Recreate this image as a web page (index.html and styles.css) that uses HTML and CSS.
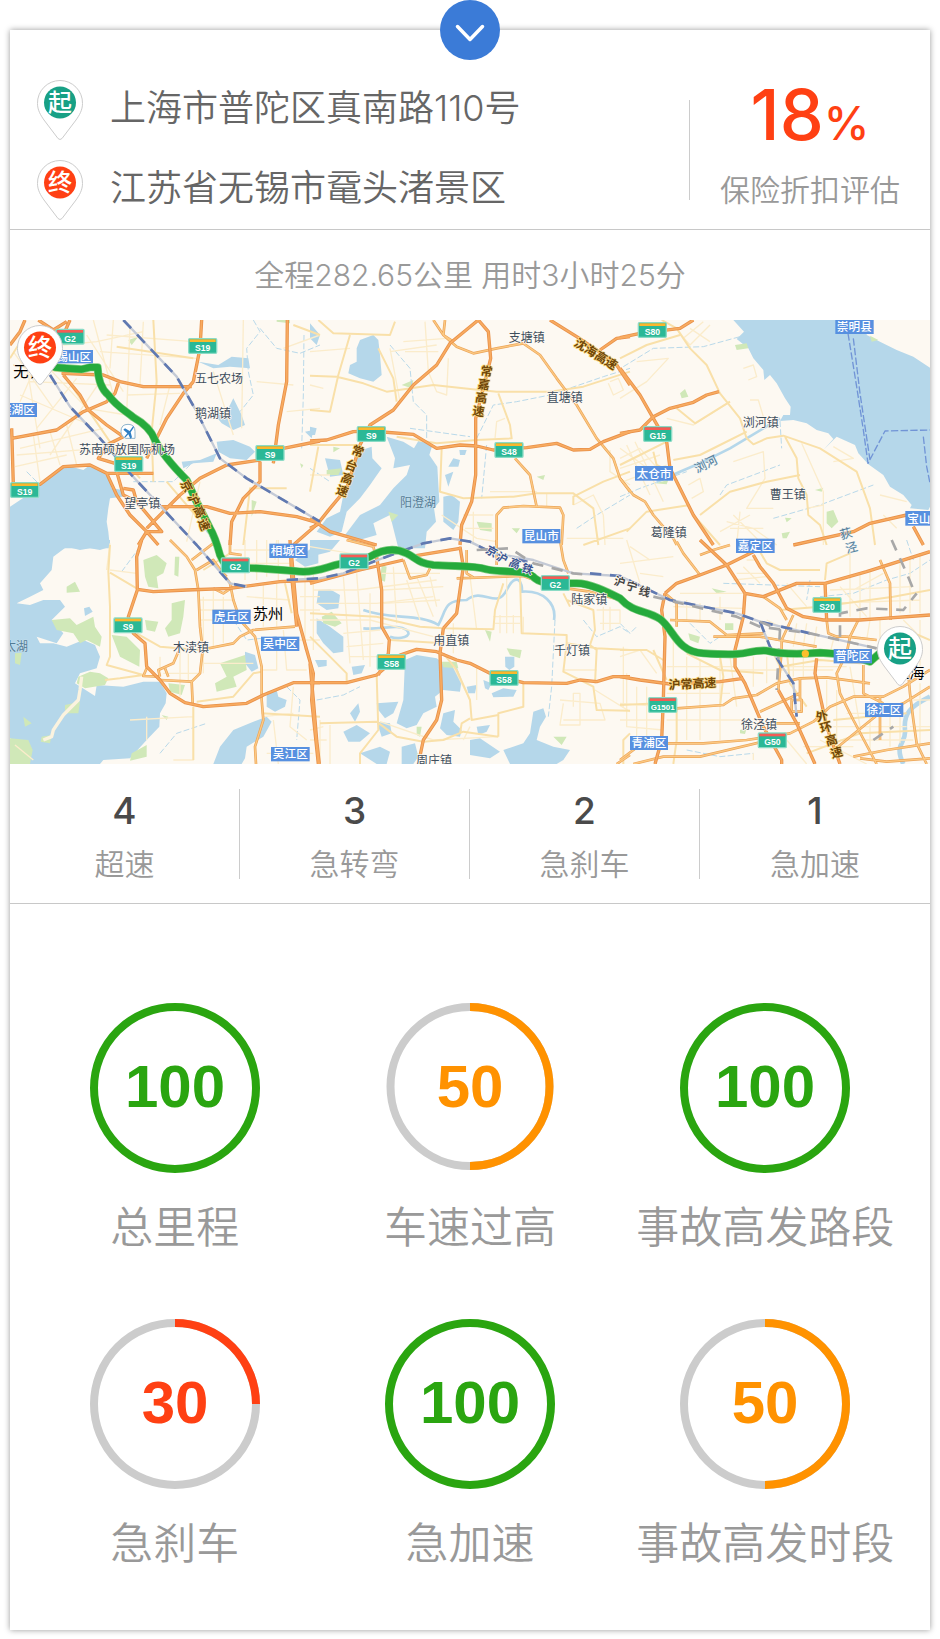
FILE: index.html
```html
<!DOCTYPE html>
<html lang="zh-CN">
<head>
<meta charset="utf-8">
<meta name="viewport" content="width=device-width, initial-scale=1">
<title>行程评估</title>
<link rel="stylesheet" href="styles.css">
</head>
<body>
<svg class="defs" aria-hidden="true">
  <defs>
    <path id="pin-shape" d="M23 .5A22.500 22.500 0 0 1 45.500 23.500C45.500 30 42.500 35 39 40L25 58.500Q23 60.500 21 58.500L7 40C3.500 35 .5 30 .5 23.500A22.500 22.500 0 0 1 23 .5Z"/>
    <symbol id="pin-start" viewBox="0 0 46 60"><use href="#pin-shape" class="pin-body"/><circle cx="23" cy="22.500" r="16" fill="#17a085"/><text class="pin-char" x="23" y="31">起</text></symbol>
    <symbol id="pin-end" viewBox="0 0 46 60"><use href="#pin-shape" class="pin-body"/><circle cx="23" cy="22.500" r="16" fill="#ff4013"/><text class="pin-char" x="23" y="31">终</text></symbol>
  </defs>
</svg>
<main class="card">
  <button class="toggle" type="button" aria-label="收起"><svg width="60" height="60" viewBox="0 0 60 60" aria-hidden="true"><path d="M17.500 26.500L30 39.500L42.500 26.500" fill="none" stroke="#fff" stroke-width="3.500" stroke-linecap="round" stroke-linejoin="round"/></svg></button>

  <header class="trip">
    <ul class="stops">
      <li class="stop"><svg class="pin" viewBox="0 0 46 60" aria-hidden="true"><use href="#pin-start" width="46" height="60"/></svg><span class="address">上海市普陀区真南路110号</span></li>
      <li class="stop"><svg class="pin" viewBox="0 0 46 60" aria-hidden="true"><use href="#pin-end" width="46" height="60"/></svg><span class="address">江苏省无锡市鼋头渚景区</span></li>
    </ul>
    <div class="divider"></div>
    <div class="discount">
      <div class="discount-value">18<span class="percent">%</span></div>
      <div class="discount-label">保险折扣评估</div>
    </div>
  </header>

  <p class="summary">全程282.65公里 用时3小时25分</p>

  <svg class="map" viewBox="0 0 2760 1332" role="img" aria-label="行程路线地图">
    <defs>
      <g id="highways">
        <path transform="translate(-30 -15)" d="M605 15L600 100L580 200L550 235L500 310L470 370L440 430M862 15L860 200L835 330L820 445M185 175L310 180L360 200L430 215L575 215M35 370L170 345L250 290L320 260L345 235L355 205M190 180L240 240L265 285L320 330L370 365M370 365L320 390L295 430L345 445M35 510L120 508L190 455L270 450L320 475L350 540L390 600L440 650L475 690M320 475L460 475M350 470L370 540L410 560L460 620L485 650L440 650L415 690M440 640L540 540L600 490L680 450L780 435L850 400L960 378M480 575L620 575L690 595L780 590L890 605L960 625M780 440L780 500L730 550L695 620L690 690M210 15L190 60L100 100M30 90L60 50L75 15M115 15L160 45L200 20M35 340L40 510M370 520L400 525L410 560M960 620L880 690"/>
        <path transform="translate(900 -15)" d="M0 378L50 375L130 350L180 348L310 358L380 400L450 390L500 393L550 405L650 398L740 385L790 405L840 403L880 380L960 350M505 15L420 85L380 150L310 210L250 285L180 330L150 390L110 520L60 580L20 630L0 640M505 15L535 50L542 130L525 200L497 310L497 480L485 560L455 630L450 690M720 15L800 65L860 105L920 150L960 210M870 105L920 70L960 65M0 610L60 650L200 690"/>
        <path transform="translate(1830 -15)" d="M0 160L60 240L100 310L140 380L150 460L220 600L280 690M0 355L60 345L100 305L150 280L220 262L260 240L297 230M0 68L60 55L180 40L220 15M520 690L700 650L750 625L860 600M880 635L910 690"/>
        <path transform="translate(-30 660)" d="M425 0L410 50L412 150L385 230L400 280L435 310L440 380L480 420L510 460L555 488L610 500L740 490L790 465L880 428L960 428M412 148L460 155L560 150L690 145L840 125L960 120M875 50L890 220L920 330L940 400L935 480L955 672M870 0L875 110L890 260"/>
        <path transform="translate(900 660)" d="M0 428L110 428L200 405L270 345L320 328L380 335L440 360L480 370L550 405L640 428L770 430L810 420L860 425L910 410L960 410M400 265L390 340L395 480L380 540L340 600L325 672M400 265L440 220L450 150L460 80L450 20M200 50L215 150L215 260L238 300L235 340L205 405M0 130L150 90L280 60M0 370L10 480L20 600L28 672M300 50L450 25"/>
        <path transform="translate(1830 660)" d="M0 410L60 420L150 432L300 425L370 415M135 160L125 210L135 290L130 480L125 600L105 672M135 160L170 130L240 105L320 75L400 35L430 0M240 0L320 75L375 160L370 230L345 330L345 380L375 430L430 560L485 660L485 672M400 45L420 80L460 130L500 205L550 230L610 240L720 240L790 235L930 225M375 160L430 170L530 130L615 130L740 95L930 35M615 130L620 240M590 355L585 400L605 490L620 560L660 672M475 450L530 550L585 672"/>
      </g>
      <g id="roads">
        <path transform="translate(900 -15)" d="M370 15L400 60L440 95L490 115L560 100L640 85L690 120L740 190L800 270L860 370L910 430L930 490L960 530M615 430L660 480L680 575M560 690V600L580 578L640 573L750 578L760 600L755 690M405 15L400 60L430 80"/>
        <path transform="translate(1830 -15)" d="M0 490L40 540L75 560L100 600L160 670L170 690"/>
        <path transform="translate(-30 660)" d="M510 0L560 50L585 90L595 150L600 260L608 330L600 400L575 425L480 420M575 425L578 490M590 90L640 60L690 130L700 180L720 240L765 290L785 380L785 480L790 540L765 620L768 672M480 410L475 390L520 370L535 335M495 385L505 410M440 385L430 408L480 410M600 330L700 310L720 290L760 270L885 260M640 70L680 110M575 60L640 10M690 0V40L725 45M640 145L670 160L700 140"/>
        <path transform="translate(900 660)" d="M280 60L300 115L350 105L360 85M440 115L640 108L700 130M110 0L190 20L200 60M470 30L470 100L490 112M560 0V75M750 0L760 60L775 100M770 145L840 155L930 180M920 672L960 645"/>
        <path transform="translate(1830 660)" d="M170 5L190 40L240 105M240 45L280 30L330 15M620 240L625 280L650 290L680 290M780 60L810 130L812 240M150 240L270 245L320 285L430 280M280 290L420 290L590 320M520 225L485 300L485 330L475 450M430 170L480 205L500 240M715 240L690 290L680 340L650 400L660 460L700 540L770 672M170 505L310 495L340 475L410 465L470 430L540 415L620 412L750 430M0 660L60 615L150 610L250 610L380 600L510 580L580 545L630 500L700 470L790 470L850 440L930 390M730 375L730 460L790 490M865 400L870 460L880 540L890 610L920 672M930 440L850 490L790 510L630 640M40 672L130 650L240 650L450 600M700 650L800 630L930 610M780 470V600M450 550L540 550M420 515L540 460M135 160L170 190L170 260M540 415V480M515 480H545V515H515ZM720 655L800 665L930 655M680 290L770 300"/>
      </g>
    </defs>
    <rect width="2760" height="1332" fill="#fdf9f2"/>

    <g fill="#b5d7ea">
      <path transform="translate(-30 -15)" d="M30 575L75 545L85 520L120 508L150 490L185 460L215 455L250 465L270 450L300 465L325 485L335 520L370 525L368 545L330 550L325 580L320 620L325 650L330 700L30 700ZM650 380L700 375L750 395L765 410L740 435L690 430L655 410ZM640 295L680 290L700 250L725 300L735 330L700 345L665 325ZM595 140L655 150L695 125L745 130L750 160L690 155L640 160ZM940 345L915 350L935 370ZM545 440L600 435L650 415L640 440L580 445L550 460Z"/>
      <path transform="translate(900 -15)" d="M150 75L190 60L205 75L210 120L215 180L190 200L150 190L115 175L120 150L140 140L140 100ZM140 410L185 395L187 430L215 460L180 510L150 550L110 590L95 650L60 665L20 650L50 610L90 590L100 540L125 490ZM230 365L280 380L312 400L325 378L368 388L358 420L382 455L388 560L372 580L378 620L350 650L345 700L265 700L255 660L240 600L190 625L200 660L130 680L105 660L150 600L210 570L250 520L290 480L300 450L250 460L255 430ZM45 430L90 435L100 480L60 485ZM400 545L425 540L450 560L445 620L430 645L400 620ZM430 430L450 435L445 455L415 455ZM405 480L430 470L415 515ZM448 405L470 405L465 420L450 420ZM0 335L20 340L15 360L0 360ZM0 25L30 60L20 90L0 70Z"/>
      <path transform="translate(1830 -15)" d="M340 15L372 50L350 72L385 100L400 130L430 165L433 195L450 180L470 205L495 250L512 275L510 300L490 300L480 318L520 315L560 325L590 345L625 355L640 372L610 405L650 365L705 390L715 415L745 448L790 480L810 515L850 540L875 570L870 580L925 585L930 575V158L880 125L830 105L780 80L740 60L745 15Z"/>
      <path transform="translate(-30 660)" d="M30 0H330V20L300 30L270 25L240 30L200 20L160 50L155 90L120 130L130 150L90 170L50 190L90 195L130 180L180 180L195 200L155 240L190 280L170 310L110 290L120 310L160 310L200 320L250 300L285 315L300 350L290 385L240 400L225 430L285 468L290 435L370 440L430 425L480 425L500 460L497 490L480 520L478 560L440 600L390 655L310 660L300 672H90L80 620L30 595ZM640 672L660 620L700 570L760 545L800 530L815 545L790 590L740 620L735 655L725 672ZM800 455L830 450L835 470L860 480L855 500L825 515L800 500ZM735 335L765 345L775 385L755 395L735 370ZM252 205L268 200L278 215L255 228ZM885 60L955 10V70L915 80Z"/>
      <path transform="translate(900 660)" d="M0 0H90L60 35L0 50ZM25 150L60 148L90 165L85 205L50 210L20 190ZM20 235L60 260L100 290L100 335L70 340L40 310L20 280ZM285 360L320 345L380 355L400 370L440 380L455 420L450 455L400 450L375 470L380 500L340 520L320 555L290 565L260 550L280 480ZM585 350H613V380L598 390L586 380ZM545 460L580 445L620 450L610 470L550 472ZM670 515L700 505L708 530L690 560L680 600L730 620L780 630L760 660L740 672H600L580 630L640 610L660 580ZM200 490L265 485L250 520L225 535L205 510ZM120 520L145 490L150 515L135 545ZM400 520L435 510L430 545L455 570L450 590L410 585L390 565ZM500 560L540 555L530 575L505 585ZM100 575L140 555L180 580L150 605L115 605ZM200 545L240 550L245 580L215 590ZM150 640L210 620L240 635L230 672H200ZM275 620L315 610L325 650L310 672H275ZM480 600L510 595L570 635L540 655L480 645ZM470 440L500 435L495 460L475 460ZM520 420L545 430L535 450L525 445ZM125 380L165 375L155 400L130 405ZM15 360L50 360L50 378L25 382Z"/>
    </g>

    <g fill="#d0e8b8">
      <path transform="translate(-30 660)" d="M430 60L470 45L500 70L490 100L470 110L475 145L445 140L435 110ZM525 50H538L535 110L523 105ZM515 190L555 180L550 230L540 280L505 290L495 265L515 240ZM435 240L475 245L465 275L440 270ZM155 240L210 235L230 255L280 230L285 260L305 290L300 320L260 300L240 310L220 280L170 270ZM335 285L380 290L420 330L418 380L360 350ZM235 410L270 395L300 400L325 415L315 435L255 445L230 430ZM195 495L240 485L235 520L195 520ZM660 370L735 345L740 390L700 410L710 440L650 455L645 430L680 410ZM505 430L555 435L545 465L510 455ZM30 595L85 600L98 630L90 672H30ZM125 590L155 585L150 610L122 605ZM70 530L95 550L75 560ZM45 340L65 338L60 375L45 370ZM200 140L225 125L240 155L200 158ZM395 640L440 615L440 650L390 662ZM485 525L505 530L500 540Z"/>
      <path transform="translate(-30 -15)" d="M385 75L415 65L395 90ZM755 555L770 560L755 605ZM900 445L910 450L905 460ZM830 15H870V25L830 20Z"/>
      <path transform="translate(900 -15)" d="M275 210L310 195L305 220ZM70 395L90 400L70 412ZM500 620L545 625L545 650L510 645ZM680 485L705 480L700 495ZM50 465L95 460L85 480L50 480ZM235 590L265 600L245 620ZM605 640L630 640L620 655Z"/>
      <path transform="translate(1830 -15)" d="M345 90L380 85L385 100L350 105ZM180 235L195 222L205 245L185 250ZM620 590L640 585L655 620L635 640L620 625ZM485 655L510 650L500 670L488 670ZM585 525L610 518L605 530ZM750 62L775 75L755 80ZM105 505L145 495L140 508ZM495 608L515 610L500 622Z"/>
      <path transform="translate(900 660)" d="M215 75L230 80L225 125L210 120ZM35 230L65 215L95 250L75 260L40 250ZM525 270L545 275L540 305ZM590 325L635 330L630 355L600 345ZM320 560L335 560L330 590L320 585ZM730 590L770 590L755 615ZM395 365L440 365L445 385L400 382ZM320 640L350 650L350 672H325Z"/>
      <path transform="translate(1830 660)" d="M315 250H340V270H315ZM205 280L240 290L235 310L210 300ZM360 570L380 565L375 582L360 580ZM275 145L320 155L290 160Z"/>
    </g>

    <g class="stream">
      <path transform="translate(-30 -15)" d="M760 15L780 50L740 100L745 170L760 240L720 290M780 40L830 100L900 115L960 90M912 60L910 240L905 400M400 500L520 500L580 440M80 470L130 520M600 620L640 680"/>
      <path transform="translate(900 -15)" d="M240 90L300 160L310 260L350 300L350 370M500 370L550 270L620 260L720 240L880 185L960 160M300 340L480 365M530 390L515 550M800 640L860 600L960 540M0 460L60 500"/>
      <path transform="translate(1830 -15)" d="M10 155L100 100L250 95L360 65M0 545L60 520L200 470M480 318L485 400M300 540L320 510L480 450M460 610L600 570L760 510"/>
      <path transform="translate(1830 660)" d="M0 250L30 280L50 260M600 170L700 160L800 120L870 100L930 60M210 250L270 310L300 290M570 120L560 180M860 0L880 60M200 630L300 650L400 640M310 130L600 140"/>
      <path transform="translate(-30 660)" d="M420 20L365 95M480 640L530 580L620 550M860 440L900 480L890 600M700 240L740 300L830 290"/>
      <path transform="translate(900 660)" d="M735 240L725 440L715 530M820 240L860 290L930 260L960 280M20 480L100 465L150 440"/>
    </g>
    <g class="river">
      <path transform="translate(900 660)" d="M160 210C240 240 330 220 385 255C410 210 400 180 470 180C520 140 560 210 590 150C620 90 640 130 635 155C700 150 740 190 732 240M240 290C270 300 310 290 290 270C260 250 220 270 160 265"/>
      <path transform="translate(1830 -15)" d="M480 310L330 400L250 440L110 500"/>
      <path transform="translate(1830 660)" stroke-width="14" d="M930 470C870 500 850 520 855 570C860 610 820 610 850 672"/>
    </g>

    <g class="lane">
      <path transform="translate(-30 -15)" d="M100 110L260 280L380 300M90 200L330 210M60 240L270 330M50 420L300 400M100 360L120 500M150 350L180 450M200 330L230 450M60 400L310 340M80 150L120 400M390 30L380 300M430 20L420 210M280 15L340 240M320 60L580 80M300 110L590 130M260 60L370 230M730 15L725 340M860 290L960 280M850 100L960 60M340 15L330 160M640 170L700 360M770 200L880 210M600 500L560 680M380 240L540 235M510 210L480 330M40 110L160 280M130 100L60 260M45 455L200 420M230 190L110 340M300 200L150 420M190 90L290 80L430 50"/>
      <path transform="translate(900 -15)" d="M0 110L120 100M240 100L270 260M280 80L410 70M285 110H385M345 20L355 170L380 230L410 240L415 130M240 110L380 90M0 210L40 220M395 600L500 670L560 680M540 530H680M710 535V575M790 570L850 540L880 600L885 690M900 200L925 190L940 225L910 240L895 205M770 670H940M555 370L560 320L585 310M900 405V470L960 510M460 600H550M465 640H550M490 590V690M0 480H60"/>
      <path transform="translate(1830 -15)" d="M370 160L400 150L410 185L385 195M390 255H415L430 305L385 310M340 440L430 410L435 490L380 580H460M545 385L610 530V690M205 510L240 490L250 530L215 550M140 310L220 330L330 260M0 430L60 400L130 480M0 400L110 480M20 390L90 540M45 380L130 560M0 460L120 420M10 500L140 450M175 50L210 90L270 30M190 70L250 20M210 40L270 80M320 620L400 640L470 690M340 600L420 680M300 650L390 600M360 590L350 690M330 640H430M640 395L700 430L640 440M780 540L860 560M790 600L830 640M560 580L610 570M50 140L145 130L80 200L0 250"/>
      <path transform="translate(-30 660)" d="M610 170V400M640 150V320M670 170V310M600 180H700M600 210H710M600 240H720M540 330V470M565 340V420M480 350V410M490 400H600M610 370H760M390 540L580 530M440 530V600M735 0V120M770 0V120M800 0V110M835 0V120M700 30H860M690 70H870M830 330V390H780M850 270L860 390H920M890 300H960M790 530L880 520M880 440L870 560L920 600M830 0L825 60M900 170H960M900 210H960M915 80V330M940 90V330M800 640H940M820 540L835 672M45 615L100 660M580 500V660H520M330 90L410 100M330 10L320 90M740 170L870 180M790 130V260M830 130V260"/>
      <path transform="translate(900 660)" d="M10 150H140L380 120M20 190H200L370 170M0 240H180L370 290M100 110L120 370M140 100L160 360M180 160V380M250 80L260 250M290 120L330 240M320 110L370 230M360 110L380 200M215 100H390M220 150L400 140M220 190L390 180M100 280L210 270M110 320L220 310M120 350L210 350M550 230H635M555 250H630M570 225V280M590 225V280M610 225V280M750 480L870 490L885 540H760M760 490L750 555H810V460H790V500M210 545L370 600L560 590M30 540V672M60 555V672M0 600H50M430 250V340M480 110L500 270M590 100V280M860 210H930V250H870M880 200V270M900 200V270M940 320V500M855 450L960 515M460 600L480 560M760 390H860M0 570L40 560M640 280V230M0 20L180 50M500 380V480M430 380L480 480"/>
      <path transform="translate(1830 660)" d="M0 350L60 330L110 400M20 400V560L130 570M50 440V590M80 440V600M0 490L120 500M0 540H120M160 300V420M200 350V600M240 360V600M300 350V600M140 380H340M140 460H330M140 540L380 540M330 350L350 500M400 350V440M440 350V430M520 350V410M550 350V410M350 390H640M480 380H680M620 420V540M650 450V600M680 520L820 520M690 380L720 560M750 490V630M810 490V620M840 500V610M640 560H860M660 600H880M690 30V230M660 140L740 230M720 100V240M750 90V240M790 100L700 150M840 60V220M870 50V220M900 40V220M620 190L900 180M630 150L880 140M500 130L560 200M350 100H440M370 80L420 130M380 60H410M340 120L440 110M180 160H370M200 180V240M240 190V240M300 170V240M160 200L370 205M530 250L520 320M560 250L550 320M590 260L580 330M640 300L630 340M750 240L740 300M780 240V300M900 240V380M850 240L890 280M900 430V620M880 480H930M870 560H930M500 600L560 672M600 600L740 672M550 620L700 620M400 660V640M30 20L90 60M0 70L160 50M20 0L60 130M60 100L130 110M440 240L480 260"/>
    </g>
    <g class="street">
      <path transform="translate(-30 -15)" d="M110 60L160 130L200 190M460 15L470 200L455 350L460 500M350 95L580 130M40 150L190 170M80 50L30 130M880 30L960 60M500 500L620 640M860 520L750 520L730 690M200 190L350 410L420 490"/>
      <path transform="translate(900 -15)" d="M0 182L80 185L160 205L230 230L370 210L460 220L560 230L720 230L820 215L960 170M120 60L85 180L60 290L0 285M25 15L70 55L240 60L255 20M205 100L250 190L260 260M565 235L600 330L605 370L500 375L380 385L260 365M25 395L0 530M395 400L390 530L460 550L610 545L680 535L790 535L850 580L865 690M790 570V545L880 500L960 470M820 690L960 640M0 390H140"/>
      <path transform="translate(1830 -15)" d="M125 15L170 40L210 100L260 150L300 235L360 310L380 370L400 388L440 370L490 362L600 400L710 470L750 580L765 690M0 130L80 90L180 60M170 280L225 325L330 260M160 435L240 420L300 390L380 350M0 450L60 420L140 380M240 600L330 530L440 500L540 480M495 365L530 430L535 490L560 540L565 600L600 630L620 690M220 600L300 690M100 410L110 450L150 470M20 650L80 590L210 570"/>
      <path transform="translate(-30 660)" d="M330 15L325 95L330 200L330 350L320 375L430 405M330 98L410 145M410 280L480 320L600 330M315 420L360 415L430 405M590 485L700 470L760 400L785 395M580 500V660M785 520L960 530M855 130L875 220M610 90L690 40"/>
      <path class="causeway" transform="translate(-30 660)" d="M245 410L240 450L235 480L190 525L160 570L155 590L130 600"/>
      <path transform="translate(900 660)" d="M0 220L200 230L330 260L400 265L550 268M240 300L400 310M0 290L60 350L110 400L110 425M30 550L200 545L260 590L340 605L400 600L460 575L565 590M200 405L205 570L150 640V672M565 590V520L640 500V430M400 340L440 390L480 480L485 540L565 525M630 110L635 280L770 285L770 310L860 325L960 330M550 270L555 210L580 130M770 310L760 395L850 440L860 510L960 512M770 180L850 210L855 270L840 315L860 330L855 430M450 580L455 550L480 535M960 580L940 600V672M760 160L780 200"/>
      <path transform="translate(1830 660)" d="M0 330H80L130 360M0 495L120 490M140 420L100 330M300 350L310 410L300 500M170 510V600L160 672M430 280L480 380L600 360L720 370L800 350M400 0L440 70L480 90L600 90M480 210L600 200L820 170L930 150M500 330L510 430L560 500M640 540L860 520M560 640L720 580L930 570M690 40L620 70L615 120M200 340L300 390L430 400M860 270L930 300"/>
    </g>

    <use href="#roads" class="road-edge"/>
    <use href="#roads" class="road-fill"/>
    <use href="#highways" class="highway-edge"/>
    <use href="#highways" class="highway-fill"/>

    <g class="rail">
      <path d="M340 0L500 170L560 275L630 415L710 475L930 605M120 165L180 260L270 355L360 460L560 675L660 790L710 800M830 780L930 775L1000 760L1130 710L1240 670L1320 655L1380 665"/>
      <path d="M1380 665L1450 700L1570 720L1690 760L1830 768L1980 840L2180 880L2250 905L2400 940L2600 985M2250 905L2280 980L2310 1030L2350 1090L2360 1190"/>
    </g>
    <g class="rail-dash">
      <path d="M340 0L500 170L560 275L630 415L710 475L930 605M120 165L180 260L270 355L360 460L560 675L660 790L710 800M830 780L930 775L1000 760L1130 710L1240 670L1320 655L1380 665L1450 700L1570 730M1740 760L1830 768L1980 840L2180 880L2250 905L2400 940M2250 905L2280 980L2310 1030L2350 1090L2360 1190"/>
      <path class="rail-gray" d="M1400 690L1500 685L1570 730L1690 760L1740 765M1930 830L2180 890L2250 920L2400 940L2600 985M2490 950V880L2570 865L2680 870L2720 820M2645 660L2690 760L2715 820M2250 905L2310 930L2300 1110M2590 1260L2650 1220"/>
    </g>
    <path class="ferry" d="M2514 40L2540 200L2560 330L2574 430L2625 333L2760 330M2530 55L2550 220L2580 420M2740 350L2750 440L2760 490"/>

    <path class="route-edge" d="M135 142L170 145L215 148L240 142H263Q265 200 295 225C320 260 350 275 370 292Q420 320 435 360C455 400 490 440 530 480C550 520 555 540 565 555L600 625Q615 650 630 705Q645 742 670 745C740 740 800 750 880 755C930 755 950 740 990 732C1040 727 1060 718 1080 710Q1140 675 1190 700C1220 715 1225 730 1270 735C1340 740 1390 735 1430 748C1480 760 1550 745 1575 775Q1590 787 1620 790H1700C1740 790 1790 815 1830 835C1870 880 1910 870 1950 897C1990 925 2000 997 2080 1000Q2150 1004 2180 1002C2220 1000 2225 990 2270 992C2310 1002 2360 1004 2430 998C2480 1000 2540 1010 2580 1025L2620 990"/>
    <path class="route" d="M135 142L170 145L215 148L240 142H263Q265 200 295 225C320 260 350 275 370 292Q420 320 435 360C455 400 490 440 530 480C550 520 555 540 565 555L600 625Q615 650 630 705Q645 742 670 745C740 740 800 750 880 755C930 755 950 740 990 732C1040 727 1060 718 1080 710Q1140 675 1190 700C1220 715 1225 730 1270 735C1340 740 1390 735 1430 748C1480 760 1550 745 1575 775Q1590 787 1620 790H1700C1740 790 1790 815 1830 835C1870 880 1910 870 1950 897C1990 925 2000 997 2080 1000Q2150 1004 2180 1002C2220 1000 2225 990 2270 992C2310 1002 2360 1004 2430 998C2480 1000 2540 1010 2580 1025L2620 990"/>
    <circle cx="2386" cy="1001" r="11" fill="#fcbf2b"/>

    <path d="M333 334Q333 313 354 313Q375 313 375 334V355H348Q333 350 333 334Z" fill="#fff" stroke="#8fb4cc" stroke-width="3"/>
    <path d="M343 351L352 340L340 329L345 325L359 333L368 320Q373 317 371 323L362 337L366 352L361 356L355 343L347 352Z" fill="#2f7fc4"/>

    <g class="town">
      <text x="555" y="190">五七农场</text><text x="555" y="293">鹅湖镇</text><text x="207" y="402">苏南硕放国际机场</text><text x="343" y="565">望亭镇</text>
      <text x="1496" y="66">支塘镇</text><text x="1610" y="246">直塘镇</text><text x="2198" y="321">浏河镇</text><text x="2279" y="538">曹王镇</text><text x="1922" y="650">葛隆镇</text>
      <text x="489" y="997">木渎镇</text><text x="1270" y="975">甪直镇</text><text x="1684" y="851">陆家镇</text><text x="1632" y="1005">千灯镇</text><text x="1218" y="1336">周庄镇</text><text x="2193" y="1227">徐泾镇</text>
      <g class="water-name"><text x="1170" y="561">阳澄湖</text><text x="-18" y="993">太湖</text><text transform="translate(2061 460) rotate(-26)">浏河</text><text transform="translate(2494 658) rotate(-15)">荻</text><text transform="translate(2510 700) rotate(-15)">泾</text></g>
    </g>
    <g class="city"><text x="10" y="170">无锡</text><text x="728" y="898">苏州</text><text x="2652" y="1074">上海</text></g>

    <g class="expressway">
      <text transform="translate(510 488) rotate(62)">京</text><text transform="translate(532 529) rotate(62)">沪</text><text transform="translate(549 564) rotate(66)">高</text><text transform="translate(563 602) rotate(68)">速</text>
      <text transform="translate(1410 164) rotate(8)">常</text><text transform="translate(1402 204) rotate(8)">嘉</text><text transform="translate(1394 244) rotate(8)">高</text><text transform="translate(1386 284) rotate(8)">速</text>
      <text transform="translate(1022 400) rotate(20)">常</text><text transform="translate(1003 443) rotate(20)">台</text><text transform="translate(990 482) rotate(20)">高</text><text transform="translate(976 519) rotate(20)">速</text>
      <text transform="translate(1690 75) rotate(32)">沈海高速</text>
      <text transform="translate(1976 1108) rotate(-3)">沪常高速</text>
      <text transform="translate(2422 1205) rotate(-15)">外</text><text transform="translate(2434 1239) rotate(-15)">环</text><text transform="translate(2450 1277) rotate(-15)">高</text><text transform="translate(2466 1315) rotate(-15)">速</text>
    </g>
    <g class="rail-name"><text transform="translate(1424 697) rotate(29)">京</text><text transform="translate(1456 717) rotate(26)">沪</text><text transform="translate(1494 735) rotate(24)">高</text><text transform="translate(1532 752) rotate(20)">铁</text><g class="rail-name-gray"><text transform="translate(1810 793) rotate(15)">沪</text><text transform="translate(1846 807) rotate(15)">宁</text><text transform="translate(1884 822) rotate(15)">线</text></g></g>

    <g class="district">
      <rect x="134" y="90" width="115" height="40"/><text x="191" y="123">锡山区</text>
      <rect x="-34" y="249" width="115" height="42"/><text x="22" y="283">滨湖区</text>
      <rect x="2476" y="0" width="115" height="42"/><text x="2533" y="33">崇明县</text>
      <rect x="1875" y="438" width="114" height="44"/><text x="1932" y="473">太仓市</text>
      <rect x="2686" y="573" width="114" height="44"/><text x="2744" y="608">宝山区</text>
      <rect x="2178" y="656" width="116" height="43"/><text x="2236" y="690">嘉定区</text>
      <rect x="1537" y="627" width="114" height="43"/><text x="1594" y="661">昆山市</text>
      <rect x="778" y="671" width="115" height="43"/><text x="835" y="705">相城区</text>
      <rect x="607" y="869" width="115" height="43"/><text x="664" y="903">虎丘区</text>
      <rect x="753" y="950" width="115" height="43"/><text x="810" y="984">吴中区</text>
      <rect x="783" y="1281" width="116" height="43"/><text x="841" y="1315">吴江区</text>
      <rect x="1860" y="1248" width="114" height="42"/><text x="1917" y="1282">青浦区</text>
      <rect x="2471" y="987" width="115" height="43"/><text x="2528" y="1021">普陀区</text>
      <rect x="2565" y="1149" width="115" height="42"/><text x="2622" y="1183">徐汇区</text>
    </g>

    <g class="shield national">
      <g transform="translate(138 28)"><rect width="84" height="44" rx="3"/><path d="M3 6H81"/><text x="42" y="37">G2</text></g>
      <g transform="translate(1901 320)"><rect width="84" height="44" rx="3"/><path d="M3 6H81"/><text x="42" y="37">G15</text></g>
      <g transform="translate(634 714)"><rect width="84" height="44" rx="3"/><path d="M3 6H81"/><text x="42" y="37">G2</text></g>
      <g transform="translate(990 702)"><rect width="84" height="44" rx="3"/><path d="M3 6H81"/><text x="42" y="37">G2</text></g>
      <g transform="translate(1594 767)"><rect width="84" height="44" rx="3"/><path d="M3 6H81"/><text x="42" y="37">G2</text></g>
      <g transform="translate(1916 1133)"><rect width="84" height="44" rx="3"/><path d="M3 6H81"/><text x="42" y="36" font-size="24">G1501</text></g>
      <g transform="translate(2245 1239)"><rect width="84" height="44" rx="3"/><path d="M3 6H81"/><text x="42" y="37">G50</text></g>
    </g>
    <g class="shield provincial">
      <g transform="translate(536 56)"><rect width="84" height="44" rx="3"/><path d="M3 6H81"/><text x="42" y="37">S19</text></g>
      <g transform="translate(738 377)"><rect width="84" height="44" rx="3"/><path d="M3 6H81"/><text x="42" y="37">S9</text></g>
      <g transform="translate(314 410)"><rect width="84" height="44" rx="3"/><path d="M3 6H81"/><text x="42" y="37">S19</text></g>
      <g transform="translate(2 488)"><rect width="84" height="44" rx="3"/><path d="M3 6H81"/><text x="42" y="37">S19</text></g>
      <g transform="translate(1042 320)"><rect width="84" height="44" rx="3"/><path d="M3 6H81"/><text x="42" y="37">S9</text></g>
      <g transform="translate(1455 368)"><rect width="84" height="44" rx="3"/><path d="M3 6H81"/><text x="42" y="37">S48</text></g>
      <g transform="translate(1885 8)"><rect width="84" height="44" rx="3"/><path d="M3 6H81"/><text x="42" y="37">S80</text></g>
      <g transform="translate(312 894)"><rect width="84" height="44" rx="3"/><path d="M3 6H81"/><text x="42" y="37">S9</text></g>
      <g transform="translate(1102 1004)"><rect width="84" height="44" rx="3"/><path d="M3 6H81"/><text x="42" y="37">S58</text></g>
      <g transform="translate(1440 1052)"><rect width="84" height="44" rx="3"/><path d="M3 6H81"/><text x="42" y="37">S58</text></g>
      <g transform="translate(2409 833)"><rect width="84" height="44" rx="3"/><path d="M3 6H81"/><text x="42" y="37">S20</text></g>
    </g>

    <use class="map-pin" href="#pin-end" x="21" y="15" width="138" height="180"/>
    <use class="map-pin" href="#pin-start" x="2601" y="918" width="138" height="180"/>
  </svg>

  <dl class="stats">
    <div class="stat"><dd>4</dd><dt>超速</dt></div>
    <div class="stat"><dd>3</dd><dt>急转弯</dt></div>
    <div class="stat"><dd>2</dd><dt>急刹车</dt></div>
    <div class="stat"><dd>1</dd><dt>急加速</dt></div>
  </dl>

  <section class="scores" aria-label="驾驶评分">
    <figure class="score good"><svg class="gauge" viewBox="0 0 170 170"><circle class="value" cx="85" cy="85" r="81"/><text x="85" y="104">100</text></svg><figcaption>总里程</figcaption></figure>
    <figure class="score fair"><svg class="gauge" viewBox="0 0 170 170"><circle class="track" cx="85" cy="83.500" r="79.500"/><path class="value" d="M85 4A79.500 79.500 0 0 1 85 163"/><text x="85" y="104">50</text></svg><figcaption>车速过高</figcaption></figure>
    <figure class="score good"><svg class="gauge" viewBox="0 0 170 170"><circle class="value" cx="85" cy="85" r="81"/><text x="85" y="104">100</text></svg><figcaption>事故高发路段</figcaption></figure>
    <figure class="score poor"><svg class="gauge" viewBox="0 0 170 170"><circle class="track" cx="85" cy="85" r="81"/><path class="value" d="M85 4A81 81 0 0 1 166 85"/><text x="85" y="104">30</text></svg><figcaption>急刹车</figcaption></figure>
    <figure class="score good"><svg class="gauge" viewBox="0 0 170 170"><circle class="value" cx="85" cy="85" r="81"/><text x="85" y="104">100</text></svg><figcaption>急加速</figcaption></figure>
    <figure class="score fair"><svg class="gauge" viewBox="0 0 170 170"><circle class="track" cx="85" cy="85" r="81"/><path class="value" d="M85 4A81 81 0 0 1 85 166"/><text x="85" y="104">50</text></svg><figcaption>事故高发时段</figcaption></figure>
  </section>
</main>
</body>
</html>
```

FILE: styles.css
```css
* {
  box-sizing: border-box;
}

body {
  margin: 0;
  padding: 30px 10px 9px;
  background: #fff;
  color: #999;
  font-family: Inter, "Noto Sans CJK SC", sans-serif;
  font-size: 30px;
  font-weight: 350;
}

.defs {
  position: absolute;
  width: 0;
  height: 0;
}

.card {
  position: relative;
  background: #fff;
  box-shadow: 0 0 6px rgba(0, 0, 0, 0.4);
}

.toggle {
  position: absolute;
  top: -30px;
  left: 50%;
  width: 60px;
  height: 60px;
  margin-left: -30px;
  padding: 0;
  border: 0;
  border-radius: 50%;
  background: #3b7bd7;
  cursor: pointer;
}

.toggle svg {
  display: block;
}

.trip {
  display: flex;
  padding: 50px 0 9px 27px;
  border-bottom: 1px solid #c8c8c8;
}

.stops {
  display: flex;
  flex: 1;
  flex-direction: column;
  gap: 20px;
  margin: 0;
  padding: 0;
  list-style: none;
}

.stop {
  display: flex;
  gap: 27px;
}

.pin {
  flex: none;
  width: 46px;
  height: 60px;
}

.pin-body {
  fill: #fff;
  stroke: #ccc;
  stroke-width: 1;
}

.pin-char {
  fill: #fff;
  font-size: 24px;
  font-weight: 500;
  text-anchor: middle;
}

.address {
  color: #666;
  font-size: 36px;
  line-height: 56px;
}

.divider {
  width: 1px;
  margin: 20px 0;
  background: #ccc;
}

.discount {
  width: 240px;
  text-align: center;
}

.discount-value {
  color: #ff4013;
  font-size: 70px;
  font-weight: 500;
  line-height: 70px;
}

.percent {
  font-size: 46px;
  line-height: 48px;
}

.discount-label {
  margin-top: 20px;
  line-height: 40px;
}

.summary {
  margin: 0;
  line-height: 90px;
  text-align: center;
}

.map {
  display: block;
  width: 100%;
  height: auto;
  font-family: "Noto Sans CJK SC", sans-serif;
  font-weight: 400;
}

.map path {
  stroke-linejoin: round;
}

.stream,
.river,
.lane,
.street {
  fill: none;
}

.stream {
  stroke: #b9d9ea;
  stroke-width: 3;
  stroke-dasharray: 18 7;
}

.river {
  stroke: #b5d7ea;
  stroke-width: 8;
}

.lane {
  stroke: #fbeccb;
  stroke-width: 4;
}

.street {
  stroke: #f9e0a9;
  stroke-width: 6;
}

.causeway {
  stroke: #fbf3df;
  stroke-width: 10;
}

.road-edge,
.road-fill,
.highway-edge,
.highway-fill {
  fill: none;
}

.road-edge {
  stroke: #eba458;
  stroke-width: 8;
}

.road-fill {
  stroke: #fcc983;
  stroke-width: 4;
}

.highway-edge {
  stroke: #e8914a;
  stroke-width: 10;
}

.highway-fill {
  stroke: #f8ab60;
  stroke-width: 5;
}

.rail {
  fill: none;
  stroke: #c4cad6;
  stroke-width: 7;
}

.rail-dash {
  fill: none;
  stroke: #6079b1;
  stroke-width: 8;
  stroke-dasharray: 34 26;
}

.rail-gray {
  stroke: #a8a8a8;
}

.ferry {
  fill: none;
  stroke: #7194d6;
  stroke-width: 4;
  stroke-dasharray: 22 7;
}

.route,
.route-edge {
  fill: none;
  stroke: #25aa3c;
  stroke-width: 20;
  stroke-linecap: round;
}

.route-edge {
  stroke: #7ccb7d;
  stroke-width: 24;
}

.town,
.city,
.expressway,
.rail-name {
  paint-order: stroke;
  stroke: #fdf9f2;
  stroke-width: 4;
}

.town {
  fill: #3d4d5c;
  font-size: 36px;
}

.water-name {
  fill: #527b96;
  stroke: #cfe3ee;
  stroke-width: 2;
}

.city {
  fill: #000;
  font-size: 46px;
}

.expressway {
  fill: #704608;
  stroke: #fbdc86;
  font-size: 36px;
  font-weight: 700;
}

.rail-name {
  fill: #3c5693;
  font-size: 34px;
  font-weight: 700;
}

.rail-name-gray {
  fill: #444;
}

.district {
  fill: #fff;
  font-size: 35px;
  font-weight: 500;
  text-anchor: middle;
}

.district rect {
  fill: #5790e0;
}

.shield {
  fill: #fff;
  stroke-width: 8;
  font-family: "Liberation Sans", sans-serif;
  font-size: 26px;
  font-weight: 700;
  text-anchor: middle;
}

.shield rect {
  fill: #2bb896;
  stroke: #8bdbc5;
  stroke-width: 4;
}

.national {
  stroke: #f65b54;
}

.provincial {
  stroke: #fbb72c;
}

.shield text {
  stroke: none;
}

.map-pin {
  font-family: Inter, "Noto Sans CJK SC", sans-serif;
}

.stats {
  display: grid;
  grid-template-columns: repeat(4, 1fr);
  margin: 0;
  padding: 25px 0 24px;
  border-bottom: 1px solid #c8c8c8;
  text-align: center;
}

.stat {
  display: flex;
  flex-direction: column;
  gap: 16px;
  border-right: 1px solid #ccc;
}

.stat:last-child {
  border-right: 0;
}

.stat dd {
  margin: 0;
  color: #4a4a4a;
  font-size: 37px;
  font-weight: 500;
  line-height: 44px;
}

.stat dt {
  line-height: 30px;
}

.scores {
  display: grid;
  grid-template-columns: repeat(3, 1fr);
  row-gap: 62px;
  padding: 99px 17px 57px;
}

.score {
  display: flex;
  flex-direction: column;
  align-items: center;
  gap: 24px;
  margin: 0;
}

.gauge {
  width: 170px;
  height: 170px;
}

.gauge .track,
.gauge .value {
  fill: none;
  stroke-width: 8;
}

.gauge .track {
  stroke: #ccc;
}

.gauge .value {
  stroke: currentColor;
}

.gauge text {
  fill: currentColor;
  font-family: "Liberation Sans", sans-serif;
  font-size: 60px;
  font-weight: 700;
  text-anchor: middle;
}

.good {
  color: #2aa510;
}

.fair {
  color: #ff9200;
}

.poor {
  color: #ff4013;
}

.score figcaption {
  color: #999;
  font-size: 43px;
  line-height: 60px;
  white-space: nowrap;
}
```
